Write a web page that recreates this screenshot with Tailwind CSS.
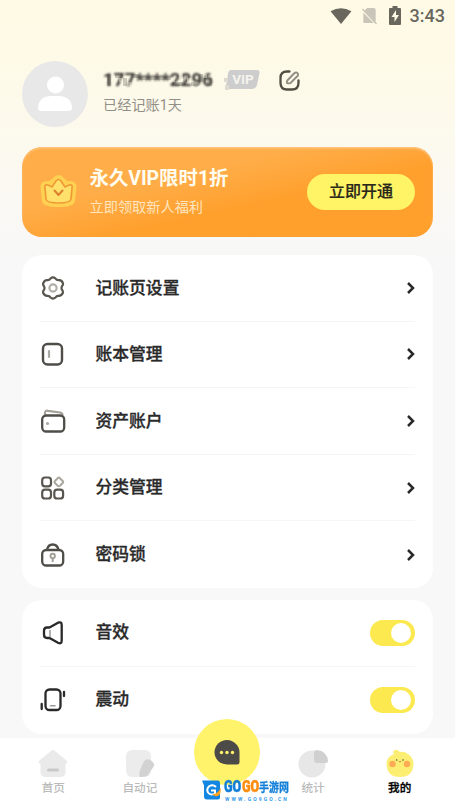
<!DOCTYPE html>
<html lang="zh-CN">
<head>
<meta charset="UTF-8">
<meta name="viewport" content="width=device-width, initial-scale=1">
<title>我的</title>
<script src="https://cdn.jsdelivr.net/npm/@tailwindcss/browser@4"></script>
</head>
<body class="h-[810px] overflow-hidden bg-[#f8f8f8] font-['Roboto','Noto_Sans_CJK_SC',sans-serif] text-[#292929]">
<div class="flex h-full flex-col bg-linear-to-b from-[#fffae5] from-0% via-[#fefae9] via-10% to-[#f8f8f8] to-32%">
  <header class="flex h-[30px] shrink-0 items-center justify-end pt-[1px] pr-[10px] text-[#68665d]">
    <svg class="mr-[9px] h-[18px] w-[22px]" viewBox="0 0 22 19"><path d="M0 4.500Q11-2 22 4.500L11 18Z" fill="currentColor"/></svg>
    <svg class="mr-[11px] h-[18px] w-[17px]" viewBox="0 0 17 19"><path d="M6 1H13Q15 1 15 3V16L3 4ZM2 6L13 17H3Q2 17 2 15Z" fill="#c9c5b8"/><path d="M1 2L16 18" stroke="#c9c5b8" stroke-width="1.500"/></svg>
    <svg class="mr-[9px] h-[19px] w-[12px]" viewBox="0 0 12 19"><path d="M3.500 0H8.500V2H11Q12 2 12 3V18Q12 19 11 19H1Q0 19 0 18V3Q0 2 1 2H3.500Z" fill="currentColor"/><path d="M7 4L2.500 11H5.500V16L10 9H7Z" fill="#fffae5"/></svg>
    <span class="pt-[1px] text-[18px] leading-none font-medium">3:43</span>
  </header>

  <section class="mt-[31px] ml-[22px] flex h-[66px] shrink-0">
    <svg class="size-[66px]" viewBox="0 0 66 66"><circle cx="33" cy="33" r="33" fill="#e9e8e8"/><circle cx="33.500" cy="24" r="8.500" fill="#fff"/><path d="M16 47C16 39 22 35 29 35H37C44 35 50 39 50 47Q50 50 47 50H19Q16 50 16 47Z" fill="#fff"/></svg>
    <div class="ml-[15px] flex flex-col">
      <div class="mt-[8px] flex h-[22px] items-center">
        <div class="relative h-[20px] w-[112px]">
          <div class="flex h-full w-[112px] items-center text-[18.500px] leading-none font-bold tracking-[0.200px] whitespace-nowrap text-[#34322e] blur-[1px]">177****2296</div>
          <svg class="absolute inset-0 h-[20px] w-[112px]" viewBox="0 0 112 20">
            <g fill="#fefae9" fill-opacity=".4"><path d="M0 8h4v4H0zM8 8h4v4H8zM16 8h4v4h-4zM24 12h4v4h-4zM68 8h4v4h-4zM76 4h4v4h-4zM84 8h4v4h-4zM92 12h4v4h-4zM100 4h4v4h-4z"/></g>
            <g fill="#55524b" fill-opacity=".3"><path d="M4 4h4v12H4zM12 4h8v4h-8zM20 8h4v8h-4zM28 4h8v4h-8zM36 6h32v4H36zM72 12h8v4h-8zM80 4h4v8h-4zM88 12h8v4h-8zM96 4h4v8h-4zM104 8h5v8h-5z"/></g>
          </svg>
        </div>
        <div class="relative ml-[9px] h-[20px] w-[36px]">
          <svg class="h-[20px] w-[36px]" viewBox="0 0 36 20"><path d="M7 0H33Q36 0 35.500 3L33 15Q32 19 28 19H5Q2 19 2 16L4 4Q4.500 0 7 0Z" fill="#cdcdcd"/><path d="M0 8h4v4H0zM1 15h4v5H1z" fill="#dedbd1"/></svg>
          <span class="absolute inset-0 flex items-center justify-center pb-[1px] pl-[2px] text-[13.500px] leading-none font-bold text-[#f5f3ed]">VIP</span>
        </div>
        <svg class="ml-[18.500px] size-[21px]" viewBox="0 0 21 21" fill="none" stroke="#514e43" stroke-width="2.300" stroke-linecap="round"><path d="M10.500 1.500H8Q1.500 1.500 1.500 8V13Q1.500 19.500 8 19.500H13Q19.500 19.500 19.500 13V10.500"/><path d="M8.300 10.500L15 3.500Q17 1.700 18.500 3.200T18 6.500L11.500 13Q10.500 13.800 8 13Q7.500 11.300 8.300 10.500Z" stroke="#918d82" stroke-width="1.900"/></svg>
      </div>
      <div class="mt-[5px] text-[14.200px] leading-[18px] text-[#928f89]">已经记账1天</div>
    </div>
  </section>

  <section class="mx-[22px] mt-[20px] flex h-[90px] shrink-0 items-center rounded-[20px] bg-linear-to-br from-[#ffad48] from-35% to-[#ffa02d] to-60% pr-[18px] pl-[17px] shadow-[inset_0_1.500px_2px_#ffc681]">
    <svg class="-mt-[4px] h-[35px] w-[39px]" viewBox="0 0 39 35"><path d="M10 8Q13 7 14 5Q20-1 25 5Q27 8 29 8Q38 8 37.500 14L36 28Q35 34 19.500 34T3 28L1.500 14Q1 8 10 8Z" fill="#ffd152"/><path d="M6 15Q5 11 9 12L13 14L17 8Q19.500 5 22 8L26 14L30 12Q34 11 33 15L32 26Q31.500 30 19.500 30T7 26Z" fill="#ffe06a" stroke="#f09a35" stroke-width="1.700"/><path d="M15.500 17.500L19.500 22L23.500 17.500" fill="none" stroke="#dc8130" stroke-width="2" stroke-linecap="round" stroke-linejoin="round"/></svg>
    <div class="-mt-[2px] ml-[11.500px] flex flex-1 flex-col whitespace-nowrap">
      <div class="text-[19.400px] leading-[28px] font-bold text-[#fffdf0]">永久VIP限时1折</div>
      <div class="mt-[3px] text-[14.200px] leading-[22px] text-[#ffe4bd]">立即领取新人福利</div>
    </div>
    <button class="h-[36px] w-[108px] rounded-full bg-[#fff466] pb-[1px] text-[16px] leading-none font-medium text-[#29271a] [-webkit-text-stroke:0.200px]">立即开通</button>
  </section>

  <section class="mx-[22px] mt-[18px] h-[333px] shrink-0 rounded-[20px] bg-white px-[18px] [-webkit-text-stroke:0.300px]">
    <div class="flex h-[66.600px] items-center border-b-[1.500px] border-[#f5f5f5]">
      <svg class="size-[26px]" viewBox="0 0 26 26" fill="none"><path d="M10.500 3.500Q13 1.300 15.500 3.500Q16.500 5.300 18.500 5.200Q22 4.800 23 8.500Q23.200 10 22 11.200Q21 13 22 14.800Q23.300 16.300 22.800 18Q21.500 21 18.500 20.800Q16.500 20.700 15.500 22.500Q13 24.700 10.500 22.500Q9.500 20.700 7.500 20.800Q4.500 21 3.200 18Q2.700 16.300 4 14.800Q5 13 4 11.200Q2.800 10 3.200 8.300Q4.500 4.800 7.500 5.200Q9.500 5.300 10.500 3.500Z" stroke="#58564e" stroke-width="2.200"/><circle cx="13" cy="13" r="3.600" stroke="#b0aea7" stroke-width="2.200"/></svg>
      <span class="ml-[29.500px] flex-1 pt-[1px] text-[16.800px] font-medium">记账页设置</span>
      <svg class="h-[14px] w-[8px]" viewBox="0 0 8 14" fill="none" stroke="#292929" stroke-width="2.500"><path d="M1 2L6 7L1 12"/></svg>
    </div>
    <div class="flex h-[66.600px] items-center border-b-[1.500px] border-[#f5f5f5]">
      <svg class="size-[26px]" viewBox="0 0 26 26" fill="none" stroke-linecap="round"><rect x="3" y="3" width="19" height="20.500" rx="4.500" stroke="#4f4d48" stroke-width="2.400"/><path d="M9 10V16" stroke="#aaa8a2" stroke-width="2.200"/></svg>
      <span class="ml-[29.500px] flex-1 text-[16.800px] font-medium">账本管理</span>
      <svg class="h-[14px] w-[8px]" viewBox="0 0 8 14" fill="none" stroke="#292929" stroke-width="2.500"><path d="M1 2L6 7L1 12"/></svg>
    </div>
    <div class="flex h-[66.600px] items-center border-b-[1.500px] border-[#f5f5f5]">
      <svg class="size-[26px]" viewBox="0 0 26 26" fill="none"><path d="M5 7V5Q5 2.300 8 2.800L20 4.500Q22.500 5 22.500 7" stroke="#a2a097" stroke-width="2.200"/><rect x="2.200" y="7.500" width="22" height="16" rx="4" stroke="#4f4d48" stroke-width="2.300"/><circle cx="7.500" cy="15.500" r="1.600" fill="#aaa8a2"/></svg>
      <span class="ml-[29.500px] flex-1 pt-[1px] text-[16.800px] font-medium">资产账户</span>
      <svg class="h-[14px] w-[8px]" viewBox="0 0 8 14" fill="none" stroke="#292929" stroke-width="2.500"><path d="M1 2L6 7L1 12"/></svg>
    </div>
    <div class="flex h-[66.600px] items-center border-b-[1.500px] border-[#f5f5f5]">
      <svg class="size-[26px]" viewBox="0 0 26 26" fill="none" stroke="#58564e" stroke-width="2.200"><rect x="2.200" y="2.500" width="8.800" height="8.800" rx="2.800"/><rect x="2.200" y="14.700" width="8.800" height="8.800" rx="2.800"/><rect x="14.300" y="14.700" width="8.800" height="8.800" rx="2.800"/><path d="M17.700 3.200Q18.800 2 19.900 3.200L22.700 6Q23.700 7 22.700 8L19.900 10.800Q18.800 11.800 17.700 10.800L14.900 8Q13.900 7 14.900 6Z" stroke="#aaa79f" stroke-width="2"/></svg>
      <span class="ml-[29.500px] flex-1 pt-[1px] text-[16.800px] font-medium">分类管理</span>
      <svg class="h-[14px] w-[8px]" viewBox="0 0 8 14" fill="none" stroke="#292929" stroke-width="2.500"><path d="M1 2L6 7L1 12"/></svg>
    </div>
    <div class="flex h-[66.600px] items-center">
      <svg class="size-[26px]" viewBox="0 0 26 26" fill="none" stroke="#4f4d48" stroke-width="2.300"><rect x="2.200" y="8" width="21" height="15.500" rx="4"/><path d="M7 8Q8 2.500 12.700 2.500T18.500 8"/><g stroke="#a2a098" stroke-width="1.900"><circle cx="12.700" cy="14" r="2.200"/><path d="M12.700 16V20"/></g></svg>
      <span class="ml-[29.500px] flex-1 text-[16.800px] font-medium">密码锁</span>
      <svg class="h-[14px] w-[8px]" viewBox="0 0 8 14" fill="none" stroke="#292929" stroke-width="2.500"><path d="M1 2L6 7L1 12"/></svg>
    </div>
  </section>

  <section class="mx-[22px] mt-[12px] h-[134px] shrink-0 rounded-[20px] bg-white px-[18px] [-webkit-text-stroke:0.300px]">
    <div class="flex h-[67px] items-center border-b-[1.500px] border-[#f5f5f5]">
      <svg class="size-[26px]" viewBox="0 0 26 26" fill="none" stroke="#292929" stroke-width="2.300" stroke-linejoin="round"><path d="M7 7.500H9.500L18 2.700Q21.700 1.300 21.700 5V20.500Q21.700 24.500 18 22.800L9.500 18H7Q4 18 4 14.500V11Q4 7.500 7 7.500Z"/><path d="M10 10V17" stroke="#999" stroke-width="1.500"/></svg>
      <span class="ml-[29.500px] flex-1 text-[16.800px] font-medium">音效</span>
      <span class="flex h-[26px] w-[45px] items-center justify-end rounded-full bg-[#fce94f] pr-[4px]"><span class="size-[20px] rounded-full bg-white"></span></span>
    </div>
    <div class="flex h-[67px] items-center pb-[2px]">
      <svg class="size-[26px]" viewBox="0 0 26 26" fill="none" stroke="#292929" stroke-width="2.300" stroke-linecap="round"><rect x="5.500" y="2.500" width="15" height="20.500" rx="4"/><path d="M1.700 17V22M24 5V9"/><path d="M10.500 18.700H15" stroke="#999" stroke-width="1.600"/></svg>
      <span class="ml-[29.500px] flex-1 text-[16.800px] font-medium">震动</span>
      <span class="flex h-[26px] w-[45px] items-center justify-end rounded-full bg-[#fce94f] pr-[4px]"><span class="size-[20px] rounded-full bg-white"></span></span>
    </div>
  </section>

  <nav class="relative mt-[4px] grid h-[72px] shrink-0 grid-cols-5 bg-white pr-[12px] pl-[10px] pt-[11px] text-[11.600px] leading-[18px] font-medium text-[#bababa]">
    <div class="flex flex-col items-center">
      <svg class="h-[29px] w-[32px]" viewBox="0 0 32 29"><path d="M14 2Q16 0 18 2L29 11Q32 14 28.500 15V23Q28.500 28 23 28H9Q3.500 28 3.500 23V15Q0 14 3 11Z" fill="#eaeaea"/><rect x="10" y="19.500" width="12" height="3" rx="1.500" fill="#c9c9c9"/></svg>
      <span class="mt-[1px]">首页</span>
    </div>
    <div class="flex flex-col items-center">
      <svg class="h-[29px] w-[32px]" viewBox="0 0 32 29"><rect x="2" y="1" width="25" height="27" rx="6" fill="#ececec"/><path d="M20 12Q23 9 27 11.500T30 17L24 26Q21 28.500 16 28Q14.500 25 16 21Z" fill="#d2d2d2"/></svg>
      <span class="mt-[1px]">自动记</span>
    </div>
    <div></div>
    <div class="flex flex-col items-center">
      <svg class="h-[29px] w-[32px]" viewBox="0 0 32 29"><circle cx="15" cy="15" r="13.500" fill="#e7e7e7"/><path d="M17 4Q17 1 20 1Q30 2 31 12Q31 14 28 14H20Q17 14 17 11Z" fill="#d0d0d0"/></svg>
      <span class="mt-[1px]">统计</span>
    </div>
    <div class="flex flex-col items-center text-black">
      <svg class="h-[29px] w-[32px]" viewBox="0 0 32 29"><path d="M10 5Q8 2 11 1Q13 0 16 3Q20 2 24 5Q29 8 29.500 15Q29 28 16 28T2.500 15Q2.500 8 10 5Z" fill="#fcee72"/><circle cx="8.500" cy="15" r="3.200" fill="#ffaa55"/><circle cx="23" cy="15" r="3.200" fill="#ffaa55"/><circle cx="12.700" cy="11" r=".8" fill="#55503c"/><circle cx="19" cy="11" r=".8" fill="#55503c"/><path d="M14.500 12H17.500L16 13.800Z" fill="#c98e3c"/></svg>
      <span class="mt-[1px] [-webkit-text-stroke:0.300px]">我的</span>
    </div>
    <div class="absolute top-[-19px] left-[194px] flex size-[66px] items-center justify-center rounded-full bg-[#fff36b]">
      <svg class="h-[25px] w-[26px]" viewBox="0 0 26 25"><path d="M13 0A13 12.300 0 0 1 25.500 12V22Q25.500 24.500 23 24.500H13A12.500 12.250 0 0 1 13 0Z" fill="#4d4b48"/><g fill="#fff36b"><circle cx="7.500" cy="12.500" r="1.700"/><circle cx="13" cy="12.500" r="1.700"/><circle cx="18.500" cy="12.500" r="1.700"/></g></svg>
    </div>
    <div class="absolute top-[42px] left-[202px] flex h-[22px] items-start">
      <svg class="h-[20px] w-[21px]" viewBox="0 0 21 19"><path d="M0 0H16Q18 0 18 3V17Q18 19 15 19H5Q2 19 2 16V5Z" fill="#1286e0"/><path d="M14 6.500Q11 3.500 7.500 5.500Q4 8.500 6 12Q8.500 15.500 13 13V10H9" fill="none" stroke="#fff" stroke-width="2"/><path d="M10 14Q17 13 18.500 7Q20 15 14 16Z" fill="#ffa321"/></svg>
      <div class="ml-[1px] flex flex-col">
        <div class="flex h-[15px] items-center whitespace-nowrap text-[#137fd8]">
          <span class="w-[17.500px]"><span class="inline-block origin-left scale-x-[.74] text-[17px] leading-[15px] font-black [-webkit-text-stroke:0.500px]">GO</span></span><span class="w-[17.500px]"><span class="inline-block origin-left scale-x-[.74] text-[17px] leading-[15px] font-black text-[#ff8d12] [-webkit-text-stroke:0.500px]">GO</span></span><span class="w-[30px]"><span class="inline-block origin-left scale-x-[.83] text-[12px] leading-[15px] font-bold [-webkit-text-stroke:0.300px]">手游网</span></span>
        </div>
        <span class="pt-[1px] pl-[1px] text-[5px] leading-[6px] font-bold tracking-[2.100px] text-[#3499e8]">WWW.GO9GO.CN</span>
      </div>
    </div>
  </nav>
</div>
</body>
</html>
